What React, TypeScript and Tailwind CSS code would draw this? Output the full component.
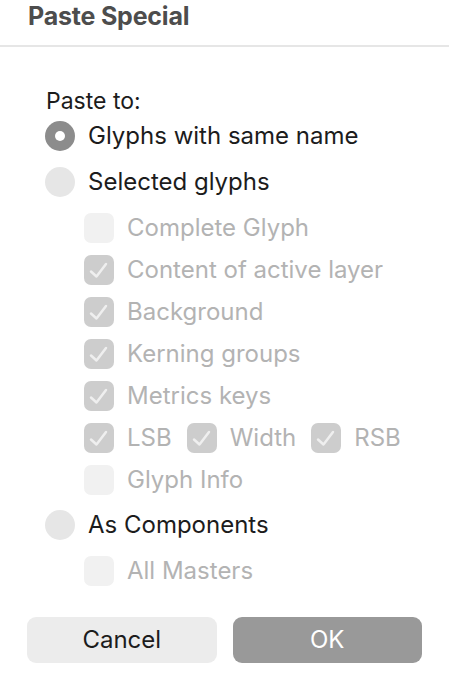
import React from "react";

const font = { fontFamily: "Inter, 'Noto Sans', sans-serif" };

function Radio({ selected }: { selected?: boolean }) {
  return selected ? (
    <div className="w-[30px] h-[30px] rounded-full bg-[#8c8c8c] flex items-center justify-center shrink-0">
      <div className="w-[10px] h-[10px] rounded-full bg-white" />
    </div>
  ) : (
    <div className="w-[30px] h-[30px] rounded-full bg-[#e6e6e6] shrink-0" />
  );
}

function Check({ checked }: { checked?: boolean }) {
  return checked ? (
    <div className="w-[30px] h-[30px] rounded-[7px] bg-[#cdcdcd] flex items-center justify-center shrink-0">
      <svg width="20" height="20" viewBox="0 0 20 20" fill="none">
        <path d="M2 11.5 L7.5 16.5 L17 4" stroke="#efefef" strokeWidth="2.5" strokeLinecap="round" strokeLinejoin="round" />
      </svg>
    </div>
  ) : (
    <div className="w-[30px] h-[30px] rounded-[7px] bg-[#f1f1f1] shrink-0" />
  );
}

function CheckRow({ label, checked }: { label: string; checked?: boolean }) {
  return (
    <div className="h-[42px] flex items-center pl-[84px]">
      <Check checked={checked} />
      <span className="ml-[13px] text-[24px] text-[#b3b3b3]">{label}</span>
    </div>
  );
}

export default function App() {
  return (
    <div className="w-[449px] h-[690px] bg-white relative overflow-hidden" style={font}>
      <div className="h-[47px] border-b-2 border-[#e6e6e6] flex items-center pl-[28px]">
        <span className="text-[25px] font-bold text-[#4d4d4d] tracking-[-0.2px] -mt-[11px]">Paste Special</span>
      </div>
      <div className="h-[42px]" />
      <div className="h-[24px] flex items-center pl-[46px]">
        <span className="text-[23px] text-[#1c1c1c]">Paste to:</span>
      </div>
      <div className="h-[46px] flex items-center pl-[45px]">
        <Radio selected />
        <span className="ml-[13px] text-[24px] text-[#1c1c1c]">Glyphs with same name</span>
      </div>
      <div className="h-[46px] flex items-center pl-[45px]">
        <Radio />
        <span className="ml-[13px] text-[24px] text-[#1c1c1c]">Selected glyphs</span>
      </div>
      <div className="h-[2px]" />
      <CheckRow label="Complete Glyph" />
      <CheckRow label="Content of active layer" checked />
      <CheckRow label="Background" checked />
      <CheckRow label="Kerning groups" checked />
      <CheckRow label="Metrics keys" checked />
      <div className="h-[42px] flex items-center pl-[84px]">
        <Check checked />
        <span className="ml-[13px] text-[24px] text-[#b3b3b3]">LSB</span>
        <div className="ml-[15px]"><Check checked /></div>
        <span className="ml-[13px] text-[24px] text-[#b3b3b3]">Width</span>
        <div className="ml-[15px]"><Check checked /></div>
        <span className="ml-[13px] text-[24px] text-[#b3b3b3]">RSB</span>
      </div>
      <CheckRow label="Glyph Info" />
      <div className="h-[1px]" />
      <div className="h-[46px] flex items-center pl-[45px]">
        <Radio />
        <span className="ml-[13px] text-[24px] text-[#1c1c1c]">As Components</span>
      </div>
      <div className="h-[2px]" />
      <CheckRow label="All Masters" />
      <div className="h-[25px]" />
      <div className="flex gap-[16px] px-[27px]">
        <button className="w-[190px] h-[46px] rounded-[9px] bg-[#ececec] text-[24px] text-[#1c1c1c]">Cancel</button>
        <button className="w-[190px] h-[46px] rounded-[9px] bg-[#999999] text-[24px] text-white">OK</button>
      </div>
    </div>
  );
}
